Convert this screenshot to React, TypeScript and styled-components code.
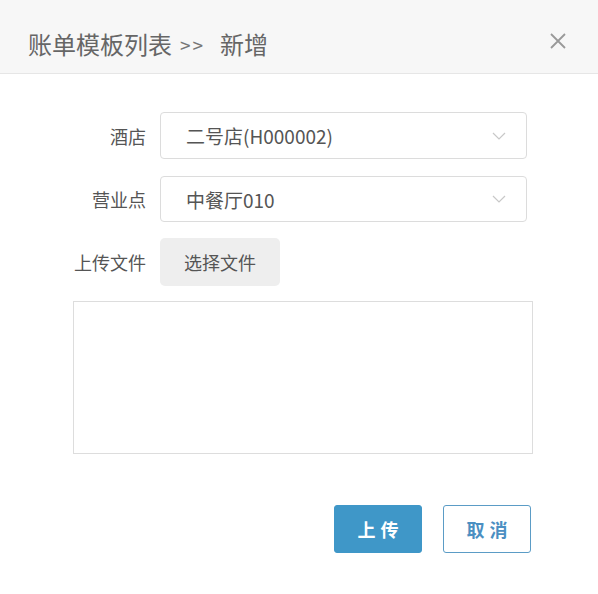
import React from "react";
import styled, { createGlobalStyle } from "styled-components";

const Global = createGlobalStyle`
  html, body { margin: 0; padding: 0; background: #ffffff; }
  body { font-family: "Noto Sans CJK SC", "Noto Sans", "Liberation Sans", sans-serif; }
  * { box-sizing: border-box; }
`;

const Dialog = styled.div`
  width: 598px;
  height: 594px;
  background: #fff;
  display: flex;
  flex-direction: column;
`;

const Header = styled.div`
  height: 74px;
  background: #f7f7f7;
  border-bottom: 1px solid #e6e6e6;
  display: flex;
  align-items: center;
  justify-content: space-between;
  padding: 13px 31px 0 28px;
`;

const Title = styled.div`
  font-size: 24px;
  color: #666;
  display: flex;
  align-items: center;
`;

const Sep = styled.span`
  font-size: 19px;
  margin: 2px 15px 0 8px;
  letter-spacing: 2px;
  color: #777;
`;

const Close = styled.div`
  width: 18px;
  height: 18px;
  display: flex;
  margin-top: -4px;
`;

const Body = styled.div`
  padding: 38px 0 0 0;
  display: flex;
  flex-direction: column;
`;

const Row = styled.div<{ $gap: number; $h: number }>`
  display: grid;
  grid-template-columns: 146px 367px;
  column-gap: 14px;
  align-items: center;
  height: ${(p) => p.$h}px;
  margin-bottom: ${(p) => p.$gap}px;
`;

const Label = styled.div`
  text-align: right;
  font-size: 18px;
  color: #555;
`;

const Select = styled.div`
  height: 100%;
  border: 1px solid #dcdcdc;
  border-radius: 4px;
  display: flex;
  align-items: center;
  justify-content: space-between;
  padding: 0 20px 0 25px;
  font-size: 19px;
  color: #555;
`;

const FileButton = styled.div`
  width: 120px;
  height: 48px;
  background: #eeeeee;
  border-radius: 5px;
  display: flex;
  align-items: center;
  justify-content: center;
  font-size: 18px;
  color: #555;
`;

const TextArea = styled.div`
  margin-left: 73px;
  width: 460px;
  height: 153px;
  border: 1px solid #dddddd;
`;

const Footer = styled.div`
  display: flex;
  justify-content: flex-end;
  gap: 21px;
  padding: 51px 67px 0 0;
`;

const Btn = styled.div<{ $primary?: boolean }>`
  width: 88px;
  height: 48px;
  border-radius: 3px;
  display: flex;
  align-items: center;
  justify-content: center;
  font-size: 18px;
  font-weight: 700;
  letter-spacing: 5px;
  padding-left: 5px;
  background: ${(p) => (p.$primary ? "#3f97c8" : "#fff")};
  color: ${(p) => (p.$primary ? "#fff" : "#4b8fc2")};
  border: 1px solid ${(p) => (p.$primary ? "#3f97c8" : "#5b9cc6")};
`;

const Chevron = () => (
  <svg width="14" height="8" viewBox="0 0 14 8">
    <path d="M1 1 L7 7 L13 1" fill="none" stroke="#c8c8c8" strokeWidth="1.2" />
  </svg>
);

export default function App() {
  return (
    <>
      <Global />
      <Dialog>
        <Header>
          <Title>
            账单模板列表<Sep>&gt;&gt;</Sep>新增
          </Title>
          <Close>
            <svg width="18" height="18" viewBox="0 0 18 18">
              <path d="M2 2 L16 16 M16 2 L2 16" stroke="#999" strokeWidth="1.8" />
            </svg>
          </Close>
        </Header>
        <Body>
          <Row $h={47} $gap={17}>
            <Label>酒店</Label>
            <Select>
              <span>二号店(H000002)</span>
              <Chevron />
            </Select>
          </Row>
          <Row $h={46} $gap={16}>
            <Label>营业点</Label>
            <Select>
              <span>中餐厅010</span>
              <Chevron />
            </Select>
          </Row>
          <Row $h={48} $gap={15}>
            <Label>上传文件</Label>
            <FileButton>选择文件</FileButton>
          </Row>
          <TextArea />
          <Footer>
            <Btn $primary>上传</Btn>
            <Btn>取消</Btn>
          </Footer>
        </Body>
      </Dialog>
    </>
  );
}
